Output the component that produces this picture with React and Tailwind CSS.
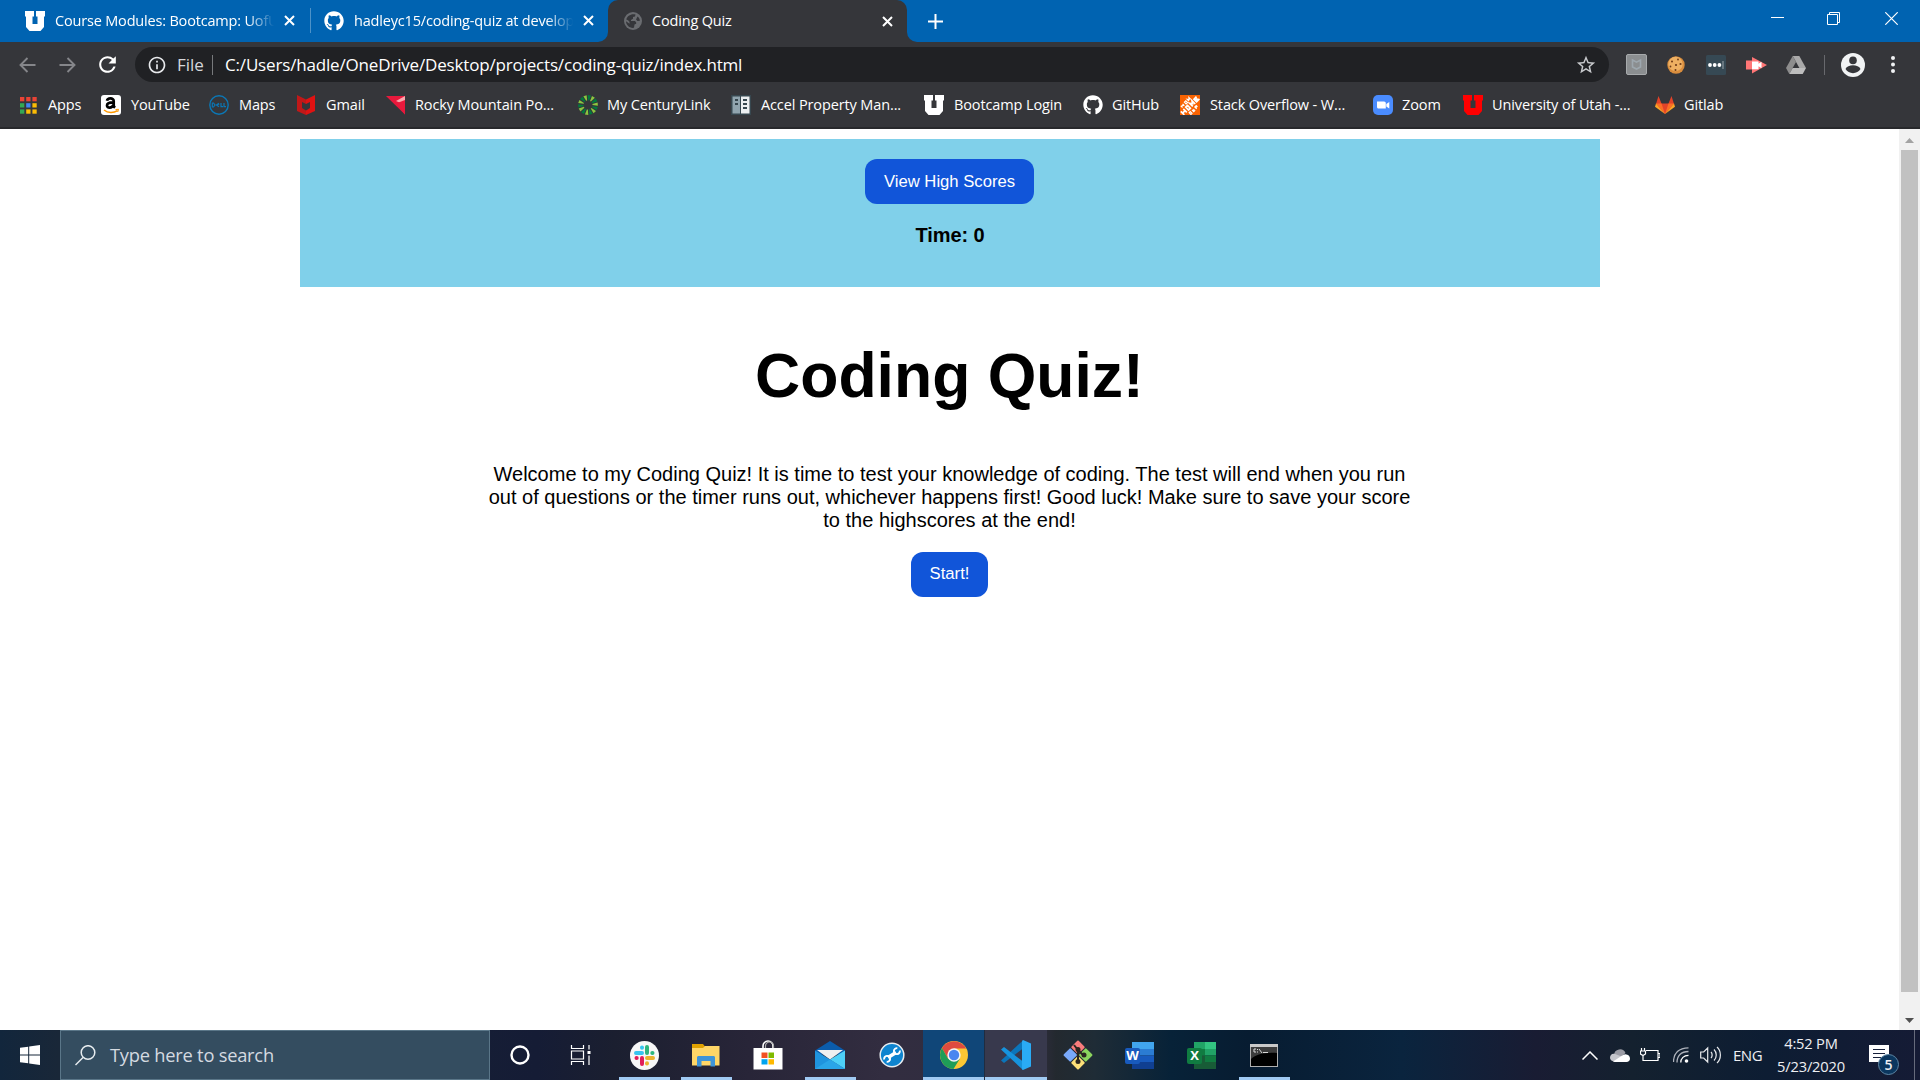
import React from "react";
import { FaGithub } from "react-icons/fa";
import { MdRefresh, MdInfoOutline, MdStarOutline } from "react-icons/md";

const UI = "font-['Open_Sans','Noto_Sans',sans-serif]";

function Svg({ w = 20, h = 20, className = "", children }) {
  return (
    <svg width={w} height={h} viewBox={`0 0 ${w} ${h}`} className={`block shrink-0 ${className}`} fill="none">
      {children}
    </svg>
  );
}

const BlockU = ({ color = "#fff" }) => (
  <Svg>
    <path fill={color} d="M0 0h9v5.500H7.500V13h5V5.500H11V0h9v5.500h-1V16l-3.500 4h-11L1 16V5.500H0z" />
  </Svg>
);
const X = ({ className = "" }) => (
  <Svg w={11} h={11} className={className}>
    <path d="M1 1l9 9M10 1l-9 9" stroke="#fff" strokeWidth="2" />
  </Svg>
);
const Globe = () => (
  <Svg w={18} h={18}>
    <circle cx="9" cy="9" r="9" fill="#6a6c70" />
    <path fill="#35363a" d="M11.500 2.600L11 4.500 9 5v1.700L7 8v1h4l1.200 1.500v1.300l-1.700.7-.5 3.300C5.500 16.500 2 13 2 9.300l3.500 2.500v-2L4 8.300 2.300 7.500C3 4 7.500 1.200 11.500 2.600zM13.500 4.500c1.300.9 2.300 2.500 2.400 4.200L13.500 9 12 7.500z" />
  </Svg>
);

const Apps = () => (
  <Svg w={20} h={20}>
    {["#ea4335", "#ea4335", "#ea4335", "#34a853", "#4285f4", "#fbbc05", "#34a853", "#fbbc05", "#fbbc05"].map((c, i) => (
      <rect key={i} x={(i % 3) * 6.2} y={2 + Math.floor(i / 3) * 6.2} width="4.3" height="4.3" fill={c} />
    ))}
  </Svg>
);
const Amazon = () => (
  <span className="flex h-5 w-5 items-center justify-center rounded-[3px] bg-white">
    <Svg w={20} h={20}>
      <path d="M6 5.800C6.500 2.800 12.700 2.500 12.700 6V10.500c0 1 .5 1.500 1.300 2.200M12 7.300C8.500 7.300 6 8 6 10.500c0 3 5 3 6.300-.5" stroke="#000" strokeWidth="2.700" />
      <path d="M3 15c4 3.300 9.500 3.300 13.500.6" stroke="#f90" strokeWidth="1.500" />
      <path d="M14.500 14.500l3-.2-.8 2.700" stroke="#f90" strokeWidth="1" />
    </Svg>
  </span>
);
const Dell = () => (
  <Svg>
    <circle cx="10" cy="10" r="9.200" stroke="#0b77b5" strokeWidth="1.400" />
    <path d="M3.300 8v4h1.200l1.500-2-1.500-2zM10 8.300L7.500 10l2.500 1.700M7.700 10l2.600-1M12 8v3.700h2M15 8v3.700h2" stroke="#0b77b5" strokeWidth="1.200" />
  </Svg>
);
const McAfee = () => (
  <Svg w={20} h={20}>
    <path fill="#c01818" d="M0 0l9 4.500V9L5 7v6l4 2.500V20l-9-4z" />
    <path fill="#e01212" d="M18 0L9 4.500V9l4-2v6l-4 2.500V20l9-4z" />
  </Svg>
);
const Rocky = () => (
  <Svg>
    <path fill="#e8193c" d="M0 1h19v18.500z" />
    <path fill="#f9a7ad" d="M19 1v9L10 6z" />
    <path fill="#e8193c" d="M10 8.500L19 5v14.500z" />
  </Svg>
);
const Century = () => (
  <Svg>
    {Array.from({ length: 14 }).map((_, i) => (
      <path key={i} d="M9.500 5.500L8.300.2h3.400L10.500 5.500z" fill={i % 2 ? "#8cc63f" : "#007a3d"} transform={`rotate(${i * 25.714 + 8} 10 10)`} />
    ))}
  </Svg>
);
const Accel = () => (
  <Svg>
    <path fill="#37474f" d="M0 0h20v20H0z" />
    <path fill="#90a4ae" d="M1.500 1.500H9v17H1.500z" />
    <path fill="#eceff1" d="M10 1.500h8.500v17H10z" />
    <path fill="#37474f" d="M4 4h3v2H4zM4 8h3v2H4zM12 4h4v2h-4zM12 8h4v2h-4zM12 12h4v2h-4z" />
  </Svg>
);
const HomeDepot = () => (
  <Svg>
    <path fill="#f96302" d="M0 0h20v20H0z" />
    <g stroke="#fff" transform="rotate(-45 10 10)">
      <path strokeWidth="1.200" d="M3 4v2.500M5.500 4v2.500M3 5.200h2.500M8 4v2.500h2V4zM12 6.500V4l1.200 1.500L14.500 4v2.500" />
      <path strokeWidth="1.700" d="M-1 8v5M2.500 8v5M-1 10.500h3.500M5.500 8.500v4h2.500v-4zM11 13V8.500l1.700 2.500 1.700-2.500V13M20.500 8.700H17v3.600h4M17 10.500h3" />
      <path strokeWidth="1.200" d="M4 14.800v2.500h1.500v-2.500zM8 14.800v2.500h2M8 16h2M12 17.500v-2.700h2V16h-2" />
    </g>
  </Svg>
);
const Zoom = () => (
  <Svg>
    <rect width="20" height="20" rx="5" fill="#4a8cff" />
    <path fill="#fff" d="M4 6.500h7c1.200 0 1.800.7 1.800 1.800v5.200H5.500c-1 0-1.500-.6-1.500-1.500zM13.300 9l3-2v6.500l-3-2z" />
  </Svg>
);
const Gitlab = () => (
  <Svg>
    <path fill="#e24329" d="M3.500 1l3 7.500h7l3-7.500 2.500 8-9 10L1 9z" />
    <path fill="#fc6d26" d="M1 8.500h5.500L10 19zM19 8.500h-5.500L10 19z" />
    <path fill="#fca326" d="M1 8.500l-1 3.300L10 19zM19 8.500l1 3.300L10 19z" />
  </Svg>
);

function Bookmark({ icon, label, w, gap = "mr-[10px]" }) {
  return (
    <div className={`flex h-full shrink-0 items-center ${w}`}>
      <span className={`flex w-5 shrink-0 justify-start ${gap}`}>{icon}</span>
      {label}
    </div>
  );
}

const TAB_TITLE = "ml-[10px] w-[219px] overflow-hidden whitespace-nowrap [mask-image:linear-gradient(to_right,#000_88%,transparent)]";

function TabBar() {
  return (
    <div className="flex h-[42px] bg-[#35363a] text-[14.500px] tracking-[-0.180px] text-white">
      <div className="flex w-[608px] items-center rounded-br-[10px] bg-[#0063b1] pb-px">
        <div className="flex w-[310px] items-center pl-[25px]">
          <BlockU />
          <span className={TAB_TITLE}>Course Modules: Bootcamp: UofU</span>
          <X className="ml-[10px]" />
        </div>
        <div className="h-[25px] w-px bg-[#4d92c8]" />
        <div className="flex items-center pl-[13px]">
          <FaGithub size={20} className="shrink-0" />
          <span className={TAB_TITLE}>hadleyc15/coding-quiz at develop</span>
          <X className="ml-[10px]" />
        </div>
      </div>
      <div className="w-[299px] bg-[#0063b1]">
        <div className="flex h-full items-center rounded-t-[10px] bg-[#35363a] pl-4">
          <Globe />
          <span className="ml-[10px] w-[220px]">Coding Quiz</span>
          <X className="ml-[10px]" />
        </div>
      </div>
      <div className="flex flex-1 items-center rounded-bl-[10px] bg-[#0063b1] pl-[21px]">
        <Svg w={15} h={15}><path d="M7.500 0v15M0 7.500h15" stroke="#fff" strokeWidth="2" /></Svg>
        <div className="mb-[5px] ml-auto flex items-center pr-[22px]">
          <Svg w={13} h={13}><path d="M0 5.500h13" stroke="#fff" /></Svg>
          <Svg w={13} h={13} className="ml-[43px]"><path d="M.5 2.500h10v10H.5zM2.500 2.500v-2h10v10h-2" stroke="#fff" /></Svg>
          <Svg w={13} h={13} className="ml-[45px]"><path d="M.3.3l12.400 12.400M12.700.3L.3 12.700" stroke="#fff" strokeWidth="1.200" /></Svg>
        </div>
      </div>
    </div>
  );
}

function Toolbar() {
  return (
    <div className="flex h-[45px] items-center bg-[#35363a]">
      <Svg w={17} h={16} className="ml-[19px]"><path d="M16.500 8H2M8.500 1L1.500 8l7 7" stroke="#85868a" strokeWidth="1.900" /></Svg>
      <Svg w={17} h={16} className="ml-[23px]"><path d="M.5 8H15M8.500 1l7 7-7 7" stroke="#85868a" strokeWidth="1.900" /></Svg>
      <MdRefresh size={25} className="ml-[19px] shrink-0 text-white" />
      <div className="ml-[15px] flex h-[35px] w-[1474px] items-center rounded-full bg-[#202124] pl-[12px] text-[17px] text-[#e8eaed]">
        <MdInfoOutline size={20} className="shrink-0" />
        <span className="ml-[10px] w-[35px] text-[#d5d7da]">File</span>
        <span className="h-5 w-px bg-[#77797c]" />
        <span className="ml-[12px] whitespace-nowrap tracking-[-0.170px] text-white">C:/Users/hadle/OneDrive/Desktop/projects/coding-quiz/index.html</span>
        <MdStarOutline size={22} className="mr-3 ml-auto text-[#c8cacd]" />
      </div>
      <Svg w={21} h={21} className="ml-[17px]">
        <rect x=".5" y=".5" width="20" height="20" rx="1.500" fill="#8b8e90" stroke="#a7aaac" />
        <path d="M6.500 6l4 2.200 4-2.200v7l-4 2-4-2z" stroke="#9da7ae" strokeWidth="1.600" />
      </Svg>
      <Svg w={18} h={18} className="ml-[20px]">
        <circle cx="9" cy="9" r="8.700" fill="#d98d3d" /><circle cx="8.500" cy="8" r="7.200" fill="#eeb062" />
        <g fill="#6e3a17"><circle cx="5" cy="5.500" r="1" /><circle cx="11" cy="3.500" r=".9" /><circle cx="9" cy="9" r="1.100" /><circle cx="13.500" cy="8" r="1.100" /><circle cx="3.500" cy="10.500" r=".9" /><circle cx="8.500" cy="14" r="1" /></g>
      </Svg>
      <Svg w={20} h={20} className="ml-[21px]">
        <rect width="20" height="20" rx="1.500" fill="#364954" />
        <g fill="#fff"><circle cx="4" cy="10" r="1.900" /><circle cx="8.700" cy="10" r="1.900" /><circle cx="13.400" cy="10" r="1.900" /><path fill="#9aa6ac" d="M16.500 6h1v8h-1z" /></g>
      </Svg>
      <Svg w={21} h={18} className="ml-[20px]">
        <path fill="#ff7676" d="M0 4.500h6V1l15 8-15 8.500V13.500H0z" />
        <path fill="#fff" d="M6 5.500h6.500v2.300l3-2v6.500l-3-2v3H6z" />
      </Svg>
      <Svg w={20} h={18} className="ml-[19px]">
        <path fill="#a9a9a9" d="M6.700 0h6.600L20 12h-6.600z" /><path fill="#8d8d8d" d="M6.700 0L0 12l3.300 6L10 6z" /><path fill="#bdbdbd" d="M6.700 12H20l-3.300 6H3.300z" />
      </Svg>
      <span className="ml-[18px] h-5 w-px bg-[#68696d]" />
      <Svg w={24} h={24} className="ml-4">
        <circle cx="12" cy="12" r="12" fill="#f1f3f4" /><circle cx="12" cy="7.400" r="3.800" fill="#35363a" /><path fill="#35363a" d="M4.500 16c2-5 13-5 15 0-3 5.500-12 5.500-15 0z" />
      </Svg>
      <Svg w={4} h={17} className="ml-[26px]"><g fill="#f1f3f4"><circle cx="2" cy="2" r="2" /><circle cx="2" cy="8.500" r="2" /><circle cx="2" cy="15" r="2" /></g></Svg>
    </div>
  );
}

function Bookmarks() {
  return (
    <div className="flex h-[42px] items-center border-b-2 border-[#28292c] bg-[#35363a] pb-[5px] pl-5 text-[14.500px] tracking-[-0.120px] whitespace-nowrap text-white">
      <div className="flex w-[81px] shrink-0 items-center"><span className="w-7"><Apps /></span>Apps</div>
      <Bookmark w="w-[108px]" icon={<Amazon />} label="YouTube" />
      <Bookmark w="w-[88px]" icon={<Dell />} label="Maps" />
      <Bookmark w="w-[89px]" gap="mr-[9px]" icon={<McAfee />} label="Gmail" />
      <Bookmark w="w-[192px]" gap="mr-[9px]" icon={<Rocky />} label="Rocky Mountain Po..." />
      <Bookmark w="w-[153px]" gap="mr-[9px]" icon={<Century />} label="My CenturyLink" />
      <Bookmark w="w-[193px]" icon={<Accel />} label="Accel Property Man..." />
      <Bookmark w="w-[159px]" icon={<BlockU />} label="Bootcamp Login" />
      <Bookmark w="w-[97px]" gap="mr-[9px]" icon={<FaGithub size={20} />} label="GitHub" />
      <Bookmark w="w-[193px]" icon={<HomeDepot />} label="Stack Overflow - W..." />
      <Bookmark w="w-[90px]" gap="mr-[9px]" icon={<Zoom />} label="Zoom" />
      <Bookmark w="w-[192px]" gap="mr-[9px]" icon={<BlockU color="#f00" />} label="University of Utah -..." />
      <Bookmark w="w-[90px]" gap="mr-[9px]" icon={<Gitlab />} label="Gitlab" />
    </div>
  );
}

function QuizPage() {
  return (
    <div className="flex h-[901px] bg-white font-['Liberation_Sans',Arial,sans-serif] text-black">
      <main className="flex flex-1 flex-col items-center pt-[10px]">
        <header className="ml-px flex h-[148px] w-[1300px] flex-col items-center bg-[#80d0ea] pt-5">
          <button className="mr-px h-[45px] w-[169px] rounded-[12px] bg-[#1155d9] pb-px text-[16.670px] text-white">View High Scores</button>
          <div className="mt-[20px] text-[20px] leading-[23px] font-bold tracking-[-0.100px]">Time: 0</div>
        </header>
        <h1 className="mt-[51px] text-[62.500px] leading-[74px] font-bold">Coding Quiz!</h1>
        <p className="mt-[51px] w-[940px] text-center text-[20px] leading-[23px]">
          Welcome to my Coding Quiz! It is time to test your knowledge of coding. The test will end when you run out of questions or the timer runs out, whichever happens first! Good luck! Make sure to save your score to the highscores at the end!
        </p>
        <button className="mt-5 h-[45px] w-[77px] rounded-[12px] bg-[#1155d9] pb-[2px] text-[16.670px] text-white">Start!</button>
      </main>
      <div className="flex w-[21px] flex-col items-center bg-[#f1f1f1]">
        <Svg w={21} h={21}><path fill="#a3a3a3" d="M6 14l4.500-5L15 14z" /></Svg>
        <div className="h-[842px] w-[17px] bg-[#c1c1c1]" />
        <Svg w={21} h={21} className="mt-auto"><path fill="#505050" d="M6 9l4.500 5L15 9z" /></Svg>
      </div>
    </div>
  );
}

function TaskButton({ running, bg = "", wide, children }) {
  return (
    <div className={`flex h-full w-[62px] shrink-0 flex-col items-center ${bg}`}>
      <div className="flex flex-1 items-center justify-center">{children}</div>
      <div className={`-mt-[3px] h-[3px] ${wide ? "w-full" : "w-[51px]"} ${running ? "bg-[#a0caf3]" : ""}`} />
    </div>
  );
}

const Slack = () => (
  <Svg w={29} h={29}>
    <circle cx="14.500" cy="14.500" r="14.500" fill="#f7f7f7" />
    <g strokeWidth="4" strokeLinecap="round">
      <path stroke="#36c5f0" d="M6 12h6M12 6.500v.2" /><path stroke="#2eb67d" d="M17 6v6M22.500 12h-.2" />
      <path stroke="#ecb22e" d="M17 17h6M17 22.500v-.2" /><path stroke="#e01e5a" d="M12 17v6M6.500 17h.2" />
    </g>
  </Svg>
);
const Explorer = () => (
  <Svg w={28} h={24}>
    <path fill="#e0a100" d="M0 1h11l2 2.500h14V7H0z" /><path fill="#ffd667" d="M0 5h11l2-2h14.500v19.500H0z" />
    <path fill="#3f94d8" d="M5 23.500V14.500c0-1 .8-1.500 1.500-1.500h15c.8 0 1.500.5 1.500 1.500v9h-4.500V18h-9v5.500z" />
  </Svg>
);
const Store = () => (
  <Svg w={30} h={30}>
    <path d="M10 8V6a5 5 0 0110 0v2" stroke="#fff" strokeWidth="1.600" /><path d="M12.500 8V6a4 4 0 018 0v2" stroke="#ababab" strokeWidth="1.200" />
    <path fill="#fff" d="M.5 8h29v21.500H.5z" />
    <path fill="#f25022" d="M8.500 12.500h6v5.500h-6z" /><path fill="#7fba00" d="M15.500 12.500h5.500v5.500h-5.500z" /><path fill="#00a4ef" d="M8.500 19.200h6v5.300h-6z" /><path fill="#ffb900" d="M15.500 19.200h5.500v5.300h-5.500z" />
  </Svg>
);
const Mail = () => (
  <Svg w={30} h={28}>
    <path fill="#0b5cab" d="M0 9.500L15 0l15 9.500v4H0z" /><path fill="#f0f0f0" d="M2 9h26L15 18.500z" />
    <path fill="#1f94de" d="M0 9.500L15 18.500 30 28H0z" /><path fill="#4ed0f7" d="M30 9.500V28L15 18.500z" /><path fill="#2aa5e8" d="M0 28L15 18.500 30 28z" />
  </Svg>
);
const Wrench = () => (
  <Svg w={26} h={26}>
    <circle cx="13" cy="13" r="11.800" fill="#0e84cf" stroke="#e9edf0" strokeWidth="1.500" />
    <path d="M9 15.500l8-5" stroke="#fff" strokeWidth="3.600" />
    <path d="M20.800 8.500a3 3 0 11-2.500-2.300M5.200 17.500a3 3 0 112.500 2.300" stroke="#fff" strokeWidth="1.900" />
  </Svg>
);
const Chrome = () => (
  <Svg w={28} h={28}>
    <circle cx="14" cy="14" r="14" fill="#fbc734" />
    <path fill="#de4b3f" d="M1.900 7A14 14 0 0126.100 7.500H14L8 17.500z" />
    <path fill="#1f9d58" d="M1.900 7A14 14 0 0013.500 28L20 17.500 14 20 8 17.500z" />
    <circle cx="14" cy="14" r="6.700" fill="#f4f4f4" /><circle cx="14" cy="14" r="5.200" fill="#4a86f0" />
  </Svg>
);
const Code = () => (
  <Svg w={30} h={30}>
    <path fill="#0b75ba" d="M0 20.500L22 .5V8.500L3 23z" /><path fill="#1693dd" d="M0 9.500L3 7l19 14.500V30z" />
    <path fill="#2aabf5" d="M22 0l8 3.500v23L22 30c-.8-.4-1-1-1-1.800V1.800C21 1 21.300.4 22 0z" />
  </Svg>
);
const Git = () => (
  <Svg w={30} h={30}>
    <g transform="rotate(45 15 15)">
      <rect x="4.500" y="4.500" width="10" height="10" fill="#f97c7c" rx="1" /><rect x="15.500" y="4.500" width="10" height="10" fill="#8bd45e" rx="1" />
      <rect x="15.500" y="15.500" width="10" height="10" fill="#fde079" rx="1" /><rect x="4.500" y="15.500" width="10" height="10" fill="#79a9fa" rx="1" />
    </g>
    <path d="M11 5l4 5v12M15 10l5 5" stroke="#2b2620" strokeWidth="2" /><g fill="#2b2620"><circle cx="15" cy="9.500" r="2.500" /><circle cx="15" cy="21.500" r="2.500" /><circle cx="21" cy="15" r="2.500" /></g>
  </Svg>
);
const Office = ({ c, tile, letter }) => (
  <div className="relative mr-px">
    <Svg w={29} h={27}>
      <path fill={c[0]} d="M7 0h22v7H7z" /><path fill={c[1]} d="M7 7h22v6.500H7z" /><path fill={c[2]} d="M7 13.500h22v7H7z" /><path fill={c[3]} d="M7 20h22v7H7z" />
      {letter === "X" && <><path fill="#21a366" d="M7 0h11v7H7z" /><path fill="#107c41" d="M7 7h11v6.500H7z" /><path fill="#185c37" d="M7 13.500h11V20H7z" /></>}
    </Svg>
    <span className={`absolute top-[6px] left-0 flex h-[16px] w-[15px] items-center justify-center rounded-[2px] text-[13px] leading-none font-bold text-white ${tile}`}>{letter}</span>
  </div>
);
const Cmd = () => (
  <Svg w={28} h={23} className="mr-px">
    <rect x=".5" y=".5" width="27" height="22" fill="#000" stroke="#b0b0b0" /><path fill="#c9c9c9" d="M0 0h28v3H0z" />
    <path fill="#3c3c3c" d="M1 3h26v6C14 8 5 11 1 15z" /><path d="M6 5H4v3h2M7.500 5v1M7.500 7.500v1M9 5l3 4M13 8.500h5" stroke="#d8d8d8" />
  </Svg>
);

function Taskbar() {
  return (
    <div className="flex h-[50px] items-center bg-[linear-gradient(to_right,#12263c_0%,#192738_3%,#151c35_28%,#1b1f30_32%,#282538_39%,#322d40_46%,#302d3f_54%,#23292f_55%,#1f2c36_57%,#072238_61%,#071c31_65%,#0a243e_73%,#191c33_80%,#14212f_85%,#0d1d33_92%,#151b35_100%)] text-white">
      <div className="flex w-[60px] shrink-0 justify-center">
        <Svg><path fill="#fff" d="M0 2.800L8.200 1.700v7.800H0zM9.200 1.500L20 0v9.500H9.200zM0 10.500h8.200v7.800L0 17.200zM9.200 10.500H20V20L9.200 18.500z" /></Svg>
      </div>
      <div className="flex h-full w-[430px] shrink-0 items-center border border-[#5a7688] bg-[#344d60] pl-[14px]">
        <Svg w={21} h={21}><circle cx="13" cy="7.500" r="6.800" stroke="#e8edf0" strokeWidth="1.500" /><path d="M8 12.500L.5 20" stroke="#e8edf0" strokeWidth="1.500" /></Svg>
        <span className="ml-[14px] text-[18.300px] tracking-[-0.230px] text-[#d4dae0]">Type here to search</span>
      </div>
      <div className="flex w-[60px] shrink-0 justify-center"><Svg><circle cx="10" cy="10" r="8.500" stroke="#fff" strokeWidth="2.400" /></Svg></div>
      <div className="flex w-[63px] shrink-0 justify-center pr-[2px]">
        <Svg w={21} h={20}><path d="M1.500 0v3.500h12V0M1.500 6h12v8h-12zM1.500 20v-3.500h12V20M19 0v4.500M19 10.500V20" stroke="#fff" strokeWidth="1.200" /><path fill="#fff" d="M17.500 6h3v3h-3z" /></Svg>
      </div>
      <TaskButton running><Slack /></TaskButton>
      <TaskButton running><Explorer /></TaskButton>
      <TaskButton><Store /></TaskButton>
      <TaskButton running><Mail /></TaskButton>
      <TaskButton><Wrench /></TaskButton>
      <TaskButton running wide bg="bg-[#104678] border-r border-[#202c40]"><Chrome /></TaskButton>
      <TaskButton running wide bg="bg-[#38394d]"><Code /></TaskButton>
      <TaskButton><Git /></TaskButton>
      <TaskButton><Office letter="W" tile="bg-[#185abd]" c={["#41a5ee", "#2b7cd3", "#185abd", "#103f91"]} /></TaskButton>
      <TaskButton><Office letter="X" tile="bg-[#107c41]" c={["#33c481", "#21a366", "#107c41", "#185c37"]} /></TaskButton>
      <TaskButton running><Cmd /></TaskButton>
      <div className="ml-auto flex h-full items-center text-[15px] text-[#eef0f3]">
        <Svg w={16} h={9}><path d="M.5 8.500L8 1l7.500 7.500" stroke="#fff" strokeWidth="1.500" /></Svg>
        <Svg w={20} h={14} className="ml-3"><path fill="#9b9ca5" d="M4 7a6 6 0 0111.500-2L11 9z" /><path fill="#c5c6cc" d="M0 10c0-3 2-5 5-4l8 3-8 5C2 13 0 12 0 10z" /><path fill="#fff" d="M3 13.500L13 7c4-2 7 1 7 3.500 0 2-1.500 3.500-3.500 3.500H5z" /></Svg>
        <Svg w={20} h={14} className="ml-[10px]"><path d="M6 2.500h12v10H5.500M18.500 5.500h1.500v4h-1.500M1.500 0v3M4.500 0v3M.5 3h5v3L3 7.500.5 6zM3 8v4.500h3" stroke="#fff" strokeWidth="1.200" /></Svg>
        <Svg w={16} h={16} className="ml-[13px]"><g stroke="#aeb2bb" strokeWidth="1.300"><path d="M.5 15C.5 6 6 .8 15.500.8M4 15.500C4 9 8 4.500 15.500 4.500" /><path stroke="#fff" d="M7.800 15.500c0-4 3-7.200 7.700-7.200" /></g><circle cx="13.500" cy="14" r="1.800" fill="#fff" /></Svg>
        <Svg w={21} h={18} className="ml-[11px]"><path d="M.7 6h3l4-4v14l-4-4h-3zM11 6c1.500 1.500 1.500 4.500 0 6M14 3.500c3 3 3 8 0 11M17 1c4.500 4 4.500 12 0 16" stroke="#e8eaed" strokeWidth="1.200" /></Svg>
        <span className="ml-[12px] w-[29px] tracking-[-0.500px]">ENG</span>
        <div className="ml-[8px] w-[82px] text-center text-[14.700px] leading-[23.500px] tracking-[-0.200px] whitespace-nowrap"><div>4:52 PM</div><div>5/23/2020</div></div>
        <div className="relative ml-[17px] w-[45px]">
          <Svg w={20} h={20}><path fill="#fff" d="M0 0h20v17h-7v3l-4-3H0z" /><path d="M4 4.500h12M4 8.500h12M4 12.500h8" stroke="#17203a" strokeWidth="1.200" /></Svg>
          <span className="absolute top-[9px] left-[9px] flex h-[21px] w-[21px] items-center justify-center rounded-full border border-[#5d86a4] bg-[#0b375f] text-[14px] font-semibold">5</span>
        </div>
        <div className="mr-[5px] h-full w-px bg-[#666b7c]" />
      </div>
    </div>
  );
}

export default function App() {
  return (
    <div className={`h-[1080px] w-[1920px] overflow-hidden ${UI}`}>
      <TabBar />
      <Toolbar />
      <Bookmarks />
      <QuizPage />
      <Taskbar />
    </div>
  );
}
